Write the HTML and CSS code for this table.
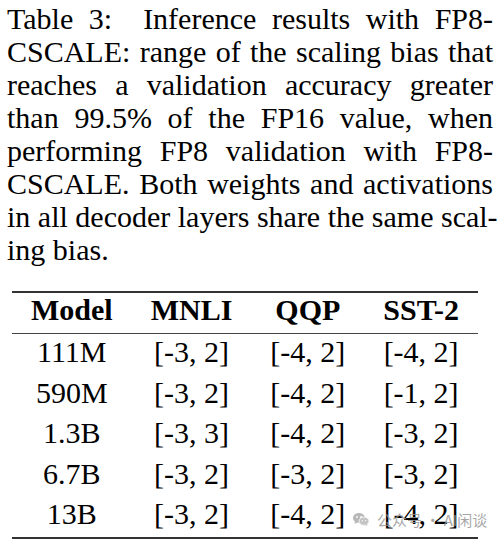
FILE: index.html
```html
<!DOCTYPE html>
<html lang="en">
<head>
<meta charset="UTF-8">
<title>Table 3</title>
<link rel="stylesheet" href="styles.css">
</head>
<body>
<div class="page">
    <p class="caption">
        <span class="ln">Table 3:&nbsp; Inference results with FP8-</span>
        <span class="ln">CSCALE: range of the scaling bias that</span>
        <span class="ln">reaches a validation accuracy greater</span>
        <span class="ln">than 99.5% of the FP16 value, when</span>
        <span class="ln">performing FP8 validation with FP8-</span>
        <span class="ln">CSCALE. Both weights and activations</span>
        <span class="ln">in all decoder layers share the same scal-</span>
        <span class="ln last">ing bias.</span>
    </p>
    <table class="results">
        <thead>
            <tr><th>Model</th><th>MNLI</th><th>QQP</th><th>SST-2</th></tr>
        </thead>
        <tbody>
            <tr><td>111M</td><td>[-3, 2]</td><td>[-4, 2]</td><td>[-4, 2]</td></tr>
            <tr><td>590M</td><td>[-3, 2]</td><td>[-4, 2]</td><td>[-1, 2]</td></tr>
            <tr><td>1.3B</td><td>[-3, 3]</td><td>[-4, 2]</td><td>[-3, 2]</td></tr>
            <tr><td>6.7B</td><td>[-3, 2]</td><td>[-3, 2]</td><td>[-3, 2]</td></tr>
            <tr><td>13B</td><td>[-3, 2]</td><td>[-4, 2]</td><td>[-4, 2]</td></tr>
        </tbody>
    </table>
    <div class="mark">
        <svg class="wechat" width="16" height="13" viewBox="0 0 16 13">
            <ellipse cx="6" cy="5" rx="6" ry="5" fill="#b8b8b8"/>
            <path d="M2 8.5 L1.5 11 L4.5 9.5 Z" fill="#b8b8b8"/>
            <ellipse cx="11" cy="8.2" rx="5" ry="4.2" fill="#c4c4c4" stroke="#fff" stroke-width="0.8"/>
            <path d="M13.5 11 L14.5 13 L12 12 Z" fill="#c4c4c4"/>
            <circle cx="4" cy="4" r="0.9" fill="#fff"/>
            <circle cx="8" cy="4" r="0.9" fill="#fff"/>
            <circle cx="9.4" cy="7.6" r="0.7" fill="#fff"/>
            <circle cx="12.6" cy="7.6" r="0.7" fill="#fff"/>
        </svg>
        <span>公众号 · AI闲谈</span>
    </div>
</div>
</body>
</html>
```

FILE: styles.css
```css
body{
    margin: 0;
    background: #fff;
    color: #000;
    font-family: "Liberation Serif", "Times New Roman", serif;
}
.page{
    position: relative;
    width: 500px;
    padding-top: 2px;
}
.caption{
    margin: 0 7px;
    font-size: 30px;
    line-height: 33px;
}
.ln{
    display: block;
    text-align: justify;
    text-align-last: justify;
    white-space: nowrap;
}
.ln.last{
    text-align-last: left;
}
.results{
    margin: 25px 0 0 12px;
    border-collapse: collapse;
    border-top: 2px solid #333;
    border-bottom: 2px solid #333;
    font-size: 30px;
}
.results th,
.results td{
    padding: 0 19px;
    text-align: center;
    white-space: nowrap;
}
.results th{
    font-weight: bold;
    line-height: 34px;
    padding-bottom: 6px;
    border-bottom: 1px solid #444;
}
.results td{
    line-height: 36px;
    padding-bottom: 4.5px;
}
.mark{
    position: absolute;
    left: 353px;
    top: 509px;
    display: flex;
    align-items: center;
    gap: 8px;
    color: rgba(150, 150, 150, 0.85);
    font-family: "Noto Sans CJK SC", sans-serif;
    font-size: 15px;
}
.wechat{
    display: block;
}
```
